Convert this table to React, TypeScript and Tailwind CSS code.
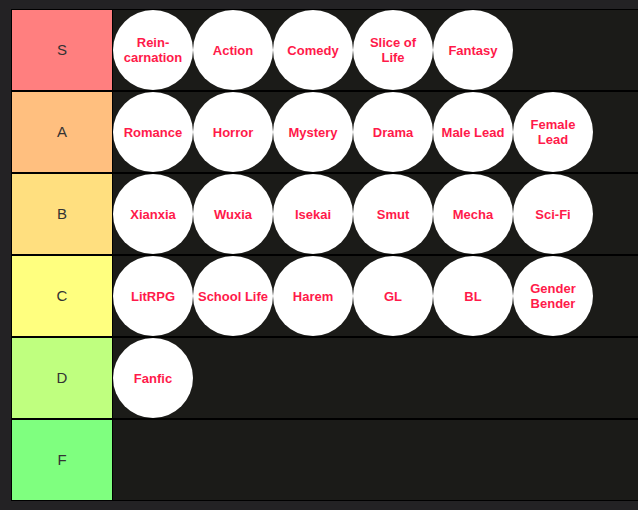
const TIERS: { label: string; color: string; items: string[] }[] = [
  { label: 'S', color: 'bg-[#ff7f7f]', items: ['Rein-carnation', 'Action', 'Comedy', 'Slice of Life', 'Fantasy'] },
  { label: 'A', color: 'bg-[#ffbf7f]', items: ['Romance', 'Horror', 'Mystery', 'Drama', 'Male Lead', 'Female Lead'] },
  { label: 'B', color: 'bg-[#ffdf7f]', items: ['Xianxia', 'Wuxia', 'Isekai', 'Smut', 'Mecha', 'Sci-Fi'] },
  { label: 'C', color: 'bg-[#ffff7f]', items: ['LitRPG', 'School Life', 'Harem', 'GL', 'BL', 'Gender Bender'] },
  { label: 'D', color: 'bg-[#bfff7f]', items: ['Fanfic'] },
  { label: 'F', color: 'bg-[#7fff7f]', items: [] },
]

function Chip({ text }: { text: string }) {
  return (
    <div className="w-[80px] h-[80px] rounded-full bg-white flex items-center justify-center shrink-0">
      <span className="max-w-[72px] text-center text-[13px] leading-[15px] font-bold text-[#ff1a4a]">
        {text}
      </span>
    </div>
  )
}

export default function App() {
  return (
    <div className="w-[638px] h-[510px] bg-[#232224] pt-[9px] pl-[11px] overflow-hidden font-['Liberation_Sans',Arial,sans-serif]">
      <div className="w-[700px] border-t border-l border-b border-black bg-black flex flex-col gap-[2px]">
        {TIERS.map(tier => (
          <div key={tier.label} className="flex h-[80px]">
            <div className={`w-[101px] shrink-0 flex items-center justify-center text-[15px] text-[#333] border-r border-black ${tier.color}`}>
              {tier.label}
            </div>
            <div className="flex-1 flex bg-[#1b1b18]">
              {tier.items.map(item => (
                <Chip key={item} text={item} />
              ))}
            </div>
          </div>
        ))}
      </div>
    </div>
  )
}
